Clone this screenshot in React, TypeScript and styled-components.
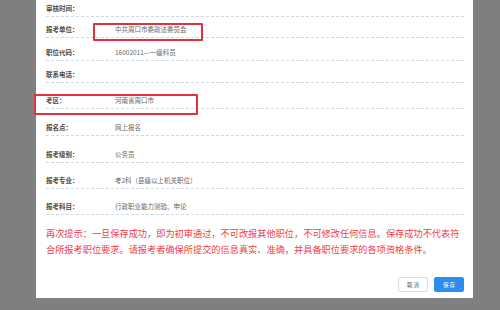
import React from 'react'
import styled, { createGlobalStyle } from 'styled-components'

const GlobalStyle = createGlobalStyle`
  html, body {
    margin: 0;
    padding: 0;
    background: #7f7f7f;
    font-family: "Noto Sans CJK SC", "Noto Sans", sans-serif;
  }
`

type Field = {
  label: string
  value: string
  height: number
  mark?: 'unit' | 'area'
}

const fields: Field[] = [
  { label: '审核时间：', value: '', height: 17 },
  { label: '报考单位：', value: '中共周口市委政法委员会', height: 21, mark: 'unit' },
  { label: '职位代码：', value: '16002011—一级科员', height: 23 },
  { label: '联系电话：', value: '', height: 22 },
  { label: '考区：', value: '河南省周口市', height: 26, mark: 'area' },
  { label: '报名点：', value: '网上报名', height: 27 },
  { label: '报考级别：', value: '公务员', height: 27 },
  { label: '报考专业：', value: '考2科（县级以上机关职位）', height: 26 },
  { label: '报考科目：', value: '行政职业能力测验、申论', height: 26 },
]

const App = () => {
  return (
    <>
      <GlobalStyle />
      <Page>
        <Modal>
          <FieldList>
            {fields.map((f) => (
              <Row key={f.label} $h={f.height}>
                <Label>{f.label}</Label>
                <Value>{f.value}</Value>
                {f.mark && <Mark $kind={f.mark} />}
              </Row>
            ))}
          </FieldList>
          <Notice>
            再次提示：一旦保存成功，即为初审通过，不可改报其他职位，不可修改任何信息。保存成功不代表符合所报考职位要求。请报考者确保所提交的信息真实、准确，并具备职位要求的各项资格条件。
          </Notice>
          <Footer>
            <Button>取 消</Button>
            <Button $primary>保 存</Button>
          </Footer>
        </Modal>
      </Page>
    </>
  )
}

export default App

const Page = styled.div`
  width: 500px;
  height: 310px;
  overflow: hidden;
`

const Modal = styled.div`
  margin-left: 36px;
  width: 437px;
  height: 298px;
  background: #fff;
  display: flex;
  flex-direction: column;
  padding: 0 9px 0 10px;
  box-sizing: border-box;
`

const FieldList = styled.div`
  display: flex;
  flex-direction: column;
`

const Row = styled.div<{ $h: number }>`
  position: relative;
  height: ${(p) => p.$h}px;
  display: flex;
  align-items: flex-end;
  padding-bottom: 3px;
  box-sizing: border-box;
  border-bottom: 1px dashed #cdd9e6;
`

const Label = styled.div`
  width: 69px;
  flex-shrink: 0;
  font-size: 6.5px;
  line-height: 10px;
  font-weight: bold;
  color: #4a4a4a;
`

const Value = styled.div`
  font-size: 6.5px;
  line-height: 10px;
  color: #666;
`

const Mark = styled.div<{ $kind: 'unit' | 'area' }>`
  position: absolute;
  border: 2px solid #e2313b;
  border-radius: 1px;
  box-sizing: border-box;
  ${(p) =>
    p.$kind === 'unit'
      ? `left: 47px; top: 6px; width: 110px; height: 18px;`
      : `left: -12px; top: 11px; width: 164px; height: 21px;`}
`

const Notice = styled.div`
  margin-top: 10px;
  font-size: 9.2px;
  line-height: 16px;
  color: #ef3d44;
`

const Footer = styled.div`
  margin-top: auto;
  margin-bottom: 6px;
  display: flex;
  justify-content: flex-end;
  gap: 6px;
`

const Button = styled.button<{ $primary?: boolean }>`
  width: 30px;
  height: 15px;
  padding: 0;
  border-radius: 2px;
  font-family: "Noto Sans CJK SC", sans-serif;
  font-size: 5.5px;
  border: 1px solid ${(p) => (p.$primary ? '#2d8cf0' : '#dcdee2')};
  background: ${(p) => (p.$primary ? '#2d8cf0' : '#fff')};
  color: ${(p) => (p.$primary ? '#fff' : '#515a6e')};
`
